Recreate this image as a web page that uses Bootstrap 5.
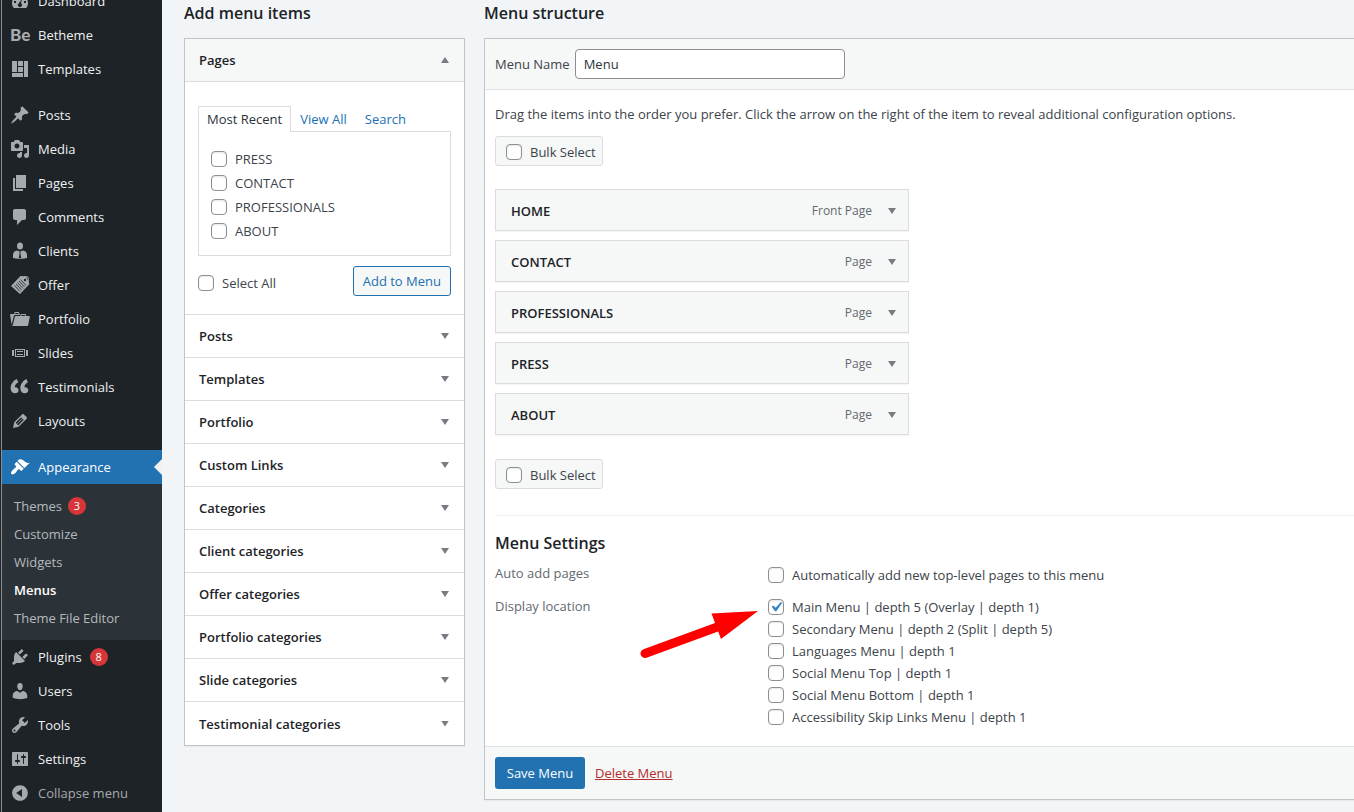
<!DOCTYPE html>
<html lang="en">
<head>
<meta charset="utf-8">
<meta name="viewport" content="width=device-width, initial-scale=1">
<title>Menus</title>
<link href="https://cdn.jsdelivr.net/npm/bootstrap@5.3.0/dist/css/bootstrap.min.css" rel="stylesheet">
<style>
  body { background: #f1f5f8; color: #3c434a; font: 400 13px/20px "Open Sans", "Noto Sans", sans-serif; overflow: hidden; }
  h2 { font-size: 16px; line-height: 24px; font-weight: 600; color: #1d2327; }

  /* admin sidebar */
  .admin-side { width: 162px; background: #1d2327; border-left: 1px solid #1d2327; }
  .admin-side-inner { display: flow-root; border-left: 1px solid #8c8f94; min-height: 100vh; }
  .admin-scroll { margin-top: -16px; }
  .side-item { display: flex; align-items: center; height: 34px; padding-left: 8px; gap: 8px; color: #f0f0f1; text-decoration: none; line-height: 18px; }
  .side-item svg { width: 20px; height: 20px; fill: #a7aaad; flex: none; }
  .side-gap { height: 12px; }
  .side-item.current { position: relative; background: #2271b1; color: #fff; }
  .side-item.current svg { fill: #fff; }
  .side-item.current::after { content: ""; position: absolute; right: 0; top: 9px; border: 8px solid transparent; border-right-color: #f0f0f1; border-left: 0; }
  .side-item.collapse-btn { background: none; border: 0; color: #a7aaad; width: 100%; }
  .be-mark { width: 20px; font: 900 17px/20px Lato, sans-serif; color: #a7aaad; }
  .submenu { background: #2c3338; padding: 8px 0; }
  .submenu a { display: flex; align-items: center; gap: 6px; height: 28px; padding-left: 12px; color: #b4b9be; text-decoration: none; }
  .submenu a.active { color: #fff; font-weight: 600; }
  .count { display: inline-grid; place-items: center; width: 18px; height: 18px; border-radius: 9px; background: #d63638; color: #fff; font-size: 11px; line-height: 18px; }

  /* shared controls */
  .main-area { padding: 1px 0 0 22px; gap: 19px; }
  .tick { width: 16px; height: 16px; margin: 0; flex: none; border: 1px solid #8c8f94; border-radius: 4px; background-color: #fff; appearance: none; box-shadow: inset 0 1px 2px rgba(0,0,0,.1); }
  .tick:checked { background: #fff url("data:image/svg+xml,%3Csvg xmlns='http://www.w3.org/2000/svg' viewBox='0 0 20 20'%3E%3Cpath d='M14.83 4.89l1.34.94-5.81 8.38H9.02L5.78 9.67l1.34-1.25 2.57 2.4z' fill='%233582c4'/%3E%3C/svg%3E") center / 20px no-repeat; }
  .tick-row { display: flex; align-items: center; gap: 8px; }
  .tri { width: 8px; height: 6px; flex: none; background: #787c82; clip-path: polygon(0 0, 100% 0, 50% 100%); }
  .tri.up { clip-path: polygon(50% 0, 100% 100%, 0 100%); }
  .panel { margin-top: 13px; background: #fff; border: 1px solid #c3c4c7; box-shadow: 0 1px 1px rgba(0,0,0,.04); }

  /* left column */
  .add-col { width: 281px; }
  .acc-head { display: flex; align-items: center; justify-content: space-between; width: 100%; height: 43px; padding: 0 15px 0 14px; border: 0; border-bottom: 1px solid #dcdcde; background: #fff; color: #1d2327; font-weight: 600; text-align: left; }
  .acc-head.open { background: #f6f7f7; }
  .acc-head:last-child { border-bottom: 0; }
  .acc-body { padding: 24px 13px 18px; border-bottom: 1px solid #dcdcde; }
  .tab-links a { padding: 2px 8px; border: 1px solid transparent; border-bottom: 0; color: #2271b1; text-decoration: none; }
  .tab-links a.active { background: #fff; border-color: #dcdcde; color: #2c3338; margin-bottom: -1px; padding-bottom: 3px; }
  .page-box { border: 1px solid #dcdcde; padding: 15px 12px 12px; }
  .page-box .tick-row { height: 24px; }
  .add-row { margin-top: 10px; }
  .add-row .tick-row { padding-top: 4px; }
  .btn-add { height: 30px; padding: 0 9px; border: 1px solid #2271b1; border-radius: 3px; background: #f6f7f7; color: #2271b1; font-size: 13px; line-height: 28px; }

  /* right column */
  .structure { border-right: 0; }
  .bar { background: #f6f7f7; padding: 10px; }
  .name-bar { gap: 5px; }
  .name-input { width: 270px; height: 30px; border: 1px solid #8c8f94; border-radius: 4px; padding: 0 8px; color: #2c3338; background: #fff; }
  .struct-body { padding: 14px 0 18px 10px; }
  .bulk { display: inline-flex; height: 30px; padding: 2px 6px 0 10px; border: 1px solid #dcdcde; border-radius: 3px; background: #f6f7f7; }
  .bulk-top { margin: 12px 0 23px; }
  .bulk-end { margin: 24px 0 26px; }
  .menu-list { width: 414px; max-width: 100%; gap: 9px; }
  .menu-node { display: flex; align-items: center; height: 42px; padding: 2px 12px 0 15px; border: 1px solid #dcdcde; background: #f6f7f7; box-shadow: 0 1px 1px rgba(0,0,0,.04); color: #1d2327; font-weight: 600; }
  .menu-node small { margin-left: auto; margin-right: 16px; font-size: 12px; font-weight: 400; color: #646970; }
  .settings { padding-top: 15px; border-top: 1px solid #f0f0f1; }
  .set-row { display: flex; }
  .set-name { width: 273px; flex: none; color: #646970; }
  .auto-row { margin: 8px 0 11px; }
  .auto-row .tick-row { padding-top: 2px; }
  .loc .tick-row { height: 22px; }
  .btn-save { width: 90px; height: 32px; padding: 0; border: 0; border-radius: 3px; background: #2271b1; color: #fff; font-size: 13px; }
  .delete { margin-left: 10px; color: #b32d2e; }
  .pointer { position: absolute; left: 143px; top: 11px; width: 122px; height: 54px; }
</style>
</head>
<body>
<div class="d-flex">
  <nav class="admin-side flex-shrink-0" aria-label="Main menu">
    <div class="admin-side-inner"><div class="admin-scroll">
      <a class="side-item" href="#"><svg viewBox="0 0 20 20"><path fill-rule="evenodd" d="M3.76 17h12.48c1.34-1.63 1.76-3.45 1.76-5 0-4.42-3.58-8-8-8s-8 3.58-8 8c0 1.56.42 3.37 1.76 5zM9 6h2v2H9zM4 10h2v2H4zm10 0h2v2h-2zM12 8l-1 4.300a2 2 0 1 1-2.400.200z"/></svg>Dashboard</a>
      <a class="side-item" href="#"><span class="be-mark">Be</span>Betheme</a>
      <a class="side-item" href="#"><svg viewBox="0 0 20 20"><path d="M2 2h5v11H2V2zm6 0h5v5H8V2zm6 0h4v16h-4V2zM8 8h5v5H8V8zm-6 6h11v4H2v-4z"/></svg>Templates</a>
      <div class="side-gap"></div>
      <a class="side-item" href="#"><svg viewBox="0 0 20 20"><path d="M10.44 3.02l1.82-1.82 6.36 6.35-1.83 1.82c-1.05-.68-2.48-.57-3.41.36l-.75.75c-.92.93-1.04 2.35-.35 3.41l-1.83 1.82-2.41-2.41-2.8 2.79c-.42.42-3.38 2.71-3.8 2.29s1.86-3.39 2.28-3.81l2.79-2.79L4.1 9.36l1.83-1.82c1.05.69 2.48.57 3.4-.36l.75-.75c.93-.92 1.05-2.35.36-3.41z"/></svg>Posts</a>
      <a class="side-item" href="#"><svg viewBox="0 0 20 20"><path fill-rule="evenodd" d="M13 11V4c0-.55-.45-1-1-1h-1.670L9 1H5L3.670 3H2c-.55 0-1 .45-1 1v7c0 .55.45 1 1 1h10c.55 0 1-.45 1-1zM7 4.500c1.380 0 2.500 1.120 2.500 2.500S8.380 9.500 7 9.500 4.500 8.380 4.500 7 5.620 4.500 7 4.500zM14 6h5v10.500c0 1.380-1.120 2.500-2.500 2.500S14 17.880 14 16.500s1.120-2.500 2.500-2.500c.17 0 .34.02.5.05V9h-3V6zm-4 8.050V13h2v3.500c0 1.380-1.120 2.500-2.500 2.500S7 17.880 7 16.500 8.120 14 9.500 14c.17 0 .34.02.5.05z"/></svg>Media</a>
      <a class="side-item" href="#"><svg viewBox="0 0 20 20"><path d="M6 15V2h10v13H6zm-1 1h8v2H3V5h2v11z"/></svg>Pages</a>
      <a class="side-item" href="#"><svg viewBox="0 0 20 20"><path d="M5 2h9c1.100 0 2 .9 2 2v7c0 1.100-.9 2-2 2h-2l-5 5v-5H5c-1.100 0-2-.9-2-2V4c0-1.100.9-2 2-2z"/></svg>Comments</a>
      <a class="side-item" href="#"><svg viewBox="0 0 20 20"><ellipse cx="10" cy="5" rx="3" ry="3.500"/><path fill-rule="evenodd" d="M7 9.500l3 1.200 3-1.200c2.500.3 4 2 4 4.500V17c-2 1-12 1-14 0v-3c0-2.500 1.500-4.200 4-4.500zM9.200 11.300l.4 1.200-.8 4.500h2.400l-.8-4.500.4-1.200z"/></svg>Clients</a>
      <a class="side-item" href="#"><svg viewBox="0 0 20 20"><path d="M1 11L10.500 1l5.500.5 3.500 7.500L10 19z"/><path d="M4.500 10.500l5.500 6M6 9l5.500 6M7.500 7.500l5.500 6M9 6l5.500 6M10.500 4.500l5.500 6" stroke="#1d2327" stroke-width=".8"/><path d="M13.500 5.500l.5-4 4 .5.5 4.500-2.500-1z" fill="none" stroke="#a7aaad"/><circle cx="15" cy="5" r="1.200" fill="#1d2327"/></svg>Offer</a>
      <a class="side-item" href="#"><svg viewBox="0 0 20 20"><path fill-rule="evenodd" d="M4 5H.78c-.37 0-.74.32-.69.84l1.560 9.990S3.500 8.470 3.860 6.700c.11-.53.61-.7.98-.7H10s-.7-2.080-.77-2.310C9.110 3.250 8.890 3 8.450 3H5.140c-.36 0-.7.23-.8.64C4.250 4.040 4 5 4 5zm4.880 0h-4s.42-1 .87-1h2.130c.48 0 1 1 1 1zM2.670 16.250c-.31.47-.76.75-1.260.75h15.730c.54 0 .92-.31 1.030-.83.44-2.190 1.680-8.440 1.680-8.440.07-.5-.3-.73-.62-.73H16V5.530c0-.16-.26-.53-.66-.53h-3.760c-.52 0-.87.58-.87.58L10 7H5.590c-.32 0-.63.19-.69.5 0 0-1.590 6.700-1.720 7.330-.07.37-.22.99-.51 1.420zM15.380 7H11s.58-1 1.130-1h2.290c.71 0 .96 1 .96 1z"/></svg>Portfolio</a>
      <a class="side-item" href="#"><svg viewBox="0 0 20 20"><path fill-rule="evenodd" d="M5 14V6h10v8H5zm-3-1V7h2v6H2zm4-6v6h8V7H6zm10 0h2v6h-2V7zm-3 2V8H7v1h6zm0 3v-1H7v1h6z"/></svg>Slides</a>
      <a class="side-item" href="#"><svg viewBox="0 0 20 20"><path d="M9.490 13.220c0-.74-.2-1.380-.61-1.900-.62-.78-1.830-.88-2.530-.72-.29-1.650 1.110-3.750 2.920-4.650L7.880 3c-2.730 1.300-5.420 5.280-4.960 9.050C3.210 14.430 4.590 16 6.540 16c.85 0 1.560-.25 2.120-.75s.83-1.180.83-2.030zm8.050 0c0-.74-.2-1.380-.61-1.900-.63-.78-1.830-.88-2.530-.72-.29-1.650 1.110-3.750 2.920-4.650L15.930 3c-2.730 1.300-5.410 5.280-4.950 9.050.29 2.380 1.660 3.950 3.610 3.950.85 0 1.560-.25 2.120-.75s.83-1.180.83-2.030z" transform="matrix(1.2 0 0 1.1 -2.8 -1.3)"/></svg>Testimonials</a>
      <a class="side-item" href="#"><svg viewBox="0 0 20 20"><path fill-rule="evenodd" d="M13.890 3.390l2.710 2.720c.46.46.42 1.240.03 1.640l-8.010 8.020-5.560 1.160 1.160-5.580s7.600-7.630 7.990-8.030c.39-.39 1.220-.39 1.680.07zm-2.730 2.790l-5.590 5.610 1.110 1.110 5.540-5.650zm-2.970 8.230l5.580-5.600-1.070-1.080-5.590 5.600z"/></svg>Layouts</a>
      <div class="side-gap"></div>
      <a class="side-item current" href="#" aria-current="true"><svg viewBox="0 0 20 20"><path d="M14.480 11.060L7.410 3.990l1.500-1.500c.5-.56 2.300-.47 3.510.32 1.210.8 1.430 1.280 2.910 2.100 1.180.64 2.450 1.260 4.450.85zm-.71.71L6.700 4.700 4.930 6.470c-.39.39-.39 1.020 0 1.410l1.060 1.060c.39.39.39 1.030 0 1.420-.6.600-1.430 1.110-2.210 1.690-.35.26-.7.53-1.010.84C1.430 14.230.4 16.080 1.400 17.070c.99 1 2.840-.03 4.180-1.360.31-.31.58-.66.85-1.020.57-.78 1.080-1.610 1.690-2.210.39-.39 1.020-.39 1.410 0l1.060 1.060c.39.39 1.020.39 1.410 0z"/></svg>Appearance</a>
      <div class="submenu">
        <a href="#">Themes <span class="count">3</span></a>
        <a href="#">Customize</a>
        <a href="#">Widgets</a>
        <a href="#" class="active">Menus</a>
        <a href="#">Theme File Editor</a>
      </div>
      <a class="side-item" href="#"><svg viewBox="0 0 20 20"><path d="M13.110 4.360L9.870 7.600 8 5.730l3.240-3.240c.35-.34 1.050-.2 1.560.32.52.51.66 1.210.31 1.550zm-8 1.770l.91-1.120 9.010 9.010-1.190.84c-.71.71-2.630 1.160-3.820 1.160H6.140L4.900 17.260c-.59.59-1.540.59-2.120 0-.59-.58-.59-1.530 0-2.120l1.240-1.240v-3.880c0-1.130.4-3.190 1.090-3.890zm7.260 3.970l3.240-3.240c.34-.35 1.040-.21 1.550.31.52.51.66 1.210.31 1.550l-3.240 3.250z"/></svg>Plugins <span class="count">8</span></a>
      <a class="side-item" href="#"><svg viewBox="0 0 20 20"><path d="M10 9.250c-2.270 0-2.730-3.440-2.730-3.440C7 4.020 7.820 2 9.970 2c2.160 0 2.980 2.020 2.710 3.810 0 0-.41 3.440-2.680 3.440zm0 2.570L12.720 10c2.390 0 4.520 2.330 4.520 4.530v2.490s-3.650 1.130-7.240 1.130c-3.650 0-7.240-1.130-7.240-1.130v-2.490c0-2.250 1.940-4.480 4.470-4.480z"/></svg>Users</a>
      <a class="side-item" href="#"><svg viewBox="0 0 20 20"><path fill-rule="evenodd" d="M16.680 9.770c-1.340 1.340-3.300 1.670-4.950.99l-5.410 6.520c-.99.99-2.590.99-3.580 0s-.99-2.590 0-3.570l6.520-5.420c-.68-1.650-.35-3.610.99-4.950 1.280-1.280 3.120-1.620 4.720-1.060l-2.890 2.890 2.820 2.820 2.860-2.870c.53 1.580.18 3.390-1.080 4.650zM3.810 16.210c.4.39 1.040.39 1.430 0 .4-.4.4-1.040 0-1.430-.39-.4-1.030-.4-1.430 0-.39.39-.39 1.030 0 1.430z"/></svg>Tools</a>
      <a class="side-item" href="#"><svg viewBox="0 0 20 20"><path fill-rule="evenodd" d="M18 16V4c0-.55-.45-1-1-1H3c-.55 0-1 .45-1 1v12c0 .55.45 1 1 1h14c.55 0 1-.45 1-1zM8 11h1c.55 0 1 .45 1 1s-.45 1-1 1H8v1.500c0 .28-.22.5-.5.5s-.5-.22-.5-.5V13H6c-.55 0-1-.45-1-1s.45-1 1-1h1V5.500c0-.28.22-.5.5-.5s.5.22.5.5V11zm5-2h-1c-.55 0-1-.45-1-1s.45-1 1-1h1V5.500c0-.28.22-.5.5-.5s.5.22.5.5V7h1c.55 0 1 .45 1 1s-.45 1-1 1h-1v5.500c0 .28-.22.5-.5.5s-.5-.22-.5-.5V9z"/></svg>Settings</a>
      <button class="side-item collapse-btn" type="button"><svg viewBox="0 0 20 20"><path fill-rule="evenodd" d="M10 2.160c4.330 0 7.840 3.510 7.840 7.840s-3.510 7.840-7.840 7.840S2.160 14.330 2.160 10 5.710 2.160 10 2.160zm2 11.720V6.120L6.180 9.970z"/></svg>Collapse menu</button>
    </div></div>
  </nav>

  <main class="main-area d-flex flex-grow-1">
    <section class="add-col flex-shrink-0">
      <h2 class="mb-0">Add menu items</h2>
      <div class="panel">
        <button type="button" class="acc-head open" aria-expanded="true">Pages <span class="tri up"></span></button>
        <div class="acc-body">
          <div class="tab-links d-flex">
            <a class="active" href="#">Most Recent</a><a href="#">View All</a><a href="#">Search</a>
          </div>
          <div class="page-box">
            <label class="tick-row"><input class="tick" type="checkbox">PRESS</label>
            <label class="tick-row"><input class="tick" type="checkbox">CONTACT</label>
            <label class="tick-row"><input class="tick" type="checkbox">PROFESSIONALS</label>
            <label class="tick-row"><input class="tick" type="checkbox">ABOUT</label>
          </div>
          <div class="d-flex justify-content-between align-items-center add-row">
            <label class="tick-row"><input class="tick" type="checkbox">Select All</label>
            <button type="button" class="btn-add">Add to Menu</button>
          </div>
        </div>
        <button type="button" class="acc-head">Posts <span class="tri"></span></button>
        <button type="button" class="acc-head">Templates <span class="tri"></span></button>
        <button type="button" class="acc-head">Portfolio <span class="tri"></span></button>
        <button type="button" class="acc-head">Custom Links <span class="tri"></span></button>
        <button type="button" class="acc-head">Categories <span class="tri"></span></button>
        <button type="button" class="acc-head">Client categories <span class="tri"></span></button>
        <button type="button" class="acc-head">Offer categories <span class="tri"></span></button>
        <button type="button" class="acc-head">Portfolio categories <span class="tri"></span></button>
        <button type="button" class="acc-head">Slide categories <span class="tri"></span></button>
        <button type="button" class="acc-head">Testimonial categories <span class="tri"></span></button>
      </div>
    </section>

    <section class="flex-grow-1">
      <h2 class="mb-0">Menu structure</h2>
      <form class="panel structure">
        <div class="bar name-bar border-bottom d-flex align-items-center">
          <label for="menu-name">Menu Name</label>
          <input class="name-input" id="menu-name" type="text" value="Menu">
        </div>
        <div class="struct-body">
          <p class="mb-0">Drag the items into the order you prefer. Click the arrow on the right of the item to reveal additional configuration options.</p>
          <label class="bulk tick-row bulk-top"><input class="tick" type="checkbox">Bulk Select</label>
          <div class="menu-list d-flex flex-column">
            <div class="menu-node">HOME <small>Front Page</small><span class="tri"></span></div>
            <div class="menu-node">CONTACT <small>Page</small><span class="tri"></span></div>
            <div class="menu-node">PROFESSIONALS <small>Page</small><span class="tri"></span></div>
            <div class="menu-node">PRESS <small>Page</small><span class="tri"></span></div>
            <div class="menu-node">ABOUT <small>Page</small><span class="tri"></span></div>
          </div>
          <label class="bulk tick-row bulk-end"><input class="tick" type="checkbox">Bulk Select</label>
          <div class="settings">
            <h2 class="mb-0">Menu Settings</h2>
            <div class="set-row auto-row">
              <span class="set-name">Auto add pages</span>
              <label class="tick-row"><input class="tick" type="checkbox">Automatically add new top-level pages to this menu</label>
            </div>
            <div class="set-row position-relative">
              <span class="set-name">Display location</span>
              <div class="loc">
                <label class="tick-row"><input class="tick" type="checkbox" checked>Main Menu | depth 5 (Overlay | depth 1)</label>
                <label class="tick-row"><input class="tick" type="checkbox">Secondary Menu | depth 2 (Split | depth 5)</label>
                <label class="tick-row"><input class="tick" type="checkbox">Languages Menu | depth 1</label>
                <label class="tick-row"><input class="tick" type="checkbox">Social Menu Top | depth 1</label>
                <label class="tick-row"><input class="tick" type="checkbox">Social Menu Bottom | depth 1</label>
                <label class="tick-row"><input class="tick" type="checkbox">Accessibility Skip Links Menu | depth 1</label>
              </div>
              <svg class="pointer" viewBox="638 607 122 54" aria-hidden="true"><path d="M645 653.500L720 626" stroke="#f00" stroke-width="9" stroke-linecap="round"/><path d="M758 611l-46.500 2.500L721 639z" fill="#f00"/></svg>
            </div>
          </div>
        </div>
        <div class="bar border-top d-flex align-items-center">
          <button type="submit" class="btn-save">Save Menu</button>
          <a class="delete" href="#">Delete Menu</a>
        </div>
      </form>
    </section>
  </main>
</div>
<script src="https://cdn.jsdelivr.net/npm/bootstrap@5.3.0/dist/js/bootstrap.bundle.min.js"></script>
</body>
</html>
